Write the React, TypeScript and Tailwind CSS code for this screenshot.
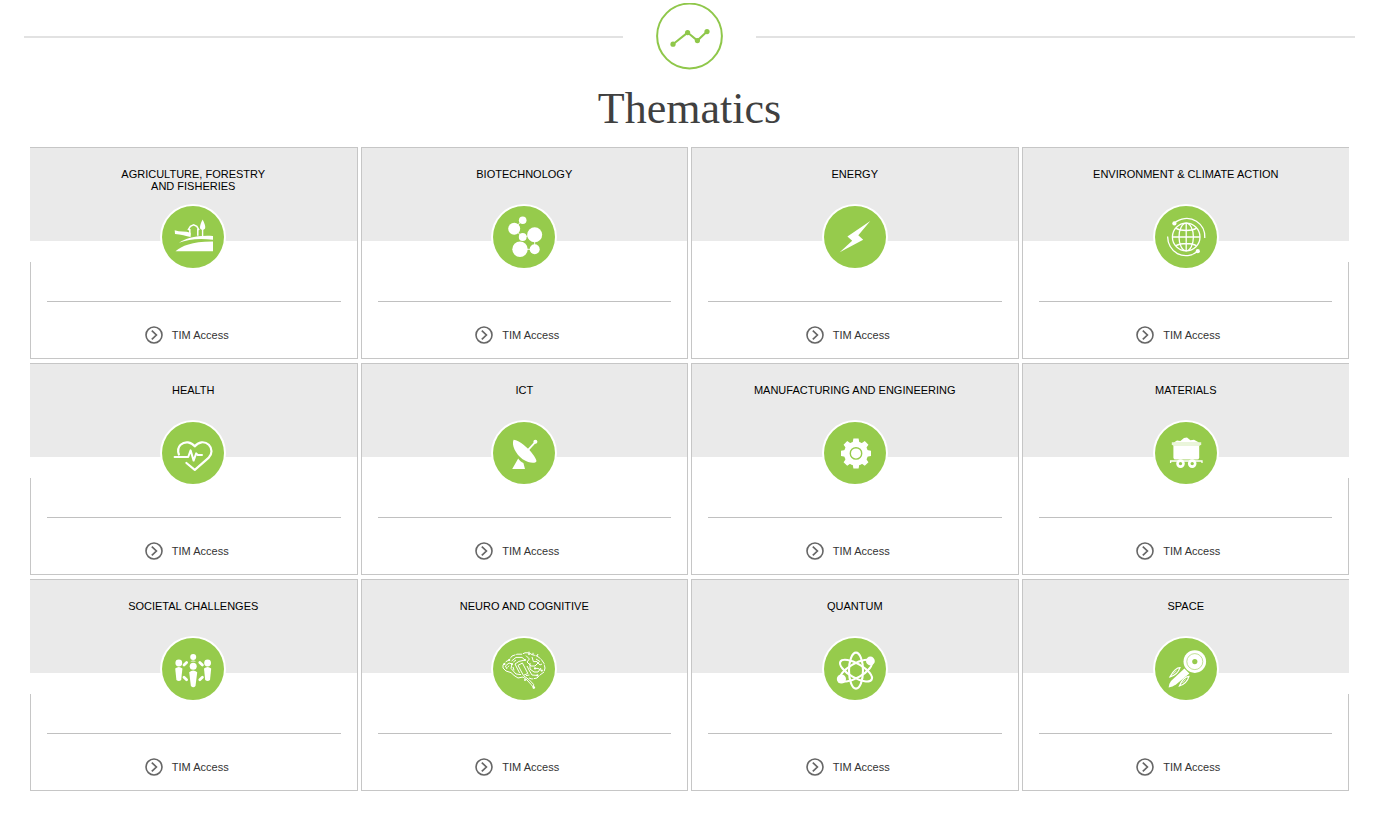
import type { ReactNode } from "react"
import { clsx } from "clsx"

interface Thematic {
  title: string
  icon: ReactNode
}

const AgricultureIcon = (
  <g>
    <path d="M15.5 47.2C22 42 32 37.4 53 37.6V47.2Z" />
    <path d="M19 38.8C26 34.4 36 31 53 32V35.8C38 34 28 35.6 19 38.8Z" />
    <path d="M14.7 26.2C20 28 25 26.8 30.6 28.8V33C26 32 21 30.4 15 30Z" />
    <path d="M28 26.2L30.4 22.4L33.6 20.8L36.8 22.4L39 26.2M29.8 25V31.5M37.8 25V31.8" fill="none" stroke="#fff" strokeWidth="1.5" />
    <path d="M42.6 15.6C44.4 19 45.5 21.8 45.2 24C44.8 26.4 40.4 26.4 40 24C39.8 21.8 40.8 19 42.6 15.6Z" />
    <path d="M41.9 25H43.3V32.4H41.9Z" />
  </g>
)

const BiotechnologyIcon = (
  <g>
    <path d="M22.7 24.7L31.7 16.3M22.7 24.7L31.7 33L43.7 30.7V45.3H29" fill="none" stroke="#fff" strokeWidth="0.9" />
    <circle cx="31.7" cy="16.3" r="3.8" />
    <circle cx="23.2" cy="24.7" r="6" />
    <circle cx="31.7" cy="33" r="3.9" />
    <circle cx="43.7" cy="30.7" r="7.5" />
    <circle cx="29" cy="45.3" r="7.7" />
    <circle cx="43.7" cy="45.3" r="5" />
  </g>
)

const EnergyIcon = <path d="M48.3 17L25.4 32.4L30.2 36.7L17.7 48.3L41.2 35.7L36.3 31.2Z" />

const EnvironmentIcon = (
  <g>
    <g fill="none" stroke="#fff" strokeWidth="1.3">
      <circle cx="33.2" cy="33" r="13.8" />
      <ellipse cx="33.2" cy="33" rx="7.2" ry="13.8" />
      <path d="M33.2 19.2V46.8M19.4 33H47M23 24.4C28 27.2 38.4 27.2 43.4 24.4M23 41.6C28 38.8 38.4 38.8 43.4 41.6" />
      <path d="M21.4 19C27 14.2 36 12.6 43.4 17.2C49 20.8 52.2 27 51.8 34" />
      <path d="M14.6 32.4C14.6 39.6 18.4 46.4 24.4 49.6C31 53 39 52.2 44.8 47.3" />
    </g>
    <circle cx="21.4" cy="19.4" r="2.1" />
    <circle cx="44.8" cy="47.2" r="2.1" />
  </g>
)

const HealthIcon = (
  <g fill="none" stroke="#fff" strokeWidth="2.2" strokeLinecap="round" strokeLinejoin="round">
    <path d="M18.9 34.5C17.6 31 18 27.4 20.6 24.8C25 20.8 31.2 21.8 34.8 26.4C38.2 21.6 44.6 20.8 48.8 24.8C52.6 28.6 52.2 34 48.8 37.6L34.8 49.8L26.4 43" />
    <path d="M14.6 37H28.2L30.6 30.4L33.6 40.6L36.2 33.4L37.8 35H42" strokeWidth="2" />
  </g>
)

const IctIcon = (
  <g>
    <path d="M22.6 19.8C26 19.8 31.6 23.4 36.8 28.6C41.8 33.4 45.8 39.4 45.4 41.4C44.4 43.4 38 43.4 31.6 39.2C24.6 34 20.2 24.8 22.6 19.8Z" />
    <path d="M35.6 31.6L44 22.4" stroke="#fff" strokeWidth="1.8" />
    <circle cx="44.4" cy="21.8" r="2" />
    <path d="M27.2 38.4C28.6 40.6 30.4 42 32.4 43L34 49H21.2Z" />
  </g>
)

const ManufacturingIcon = (
  <g>
    {[0, 45, 90, 135].map((angle) => (
      <path
        key={angle}
        transform={`rotate(${angle} 34 33.4)`}
        d="M31.4 18.4H36.6L37.6 24H30.4ZM31.4 48.4H36.6L37.6 42.8H30.4Z"
      />
    ))}
    <circle cx="34" cy="33.4" r="12" />
    <circle cx="34" cy="33.4" r="5.7" fill="none" stroke="#96cb4c" strokeWidth="1.4" />
  </g>
)

const MaterialsIcon = (
  <g>
    <path d="M20.8 22.6L24 20.4L27.4 21L31 18L34 17.6L37.4 20.2L41 19.8L46 22.6Z" />
    <path d="M18.8 22.3H48.2V24.2L46.8 25.8H20.2L18.8 24.2Z" fillOpacity="0.8" />
    <path d="M20.4 25.6H46.2V37.4Q46.2 39.6 44 39.6H22.6Q20.4 39.6 20.4 37.4Z" />
    <path d="M17.6 43V41H49V43" fill="none" stroke="#fff" strokeWidth="1.3" />
    <circle cx="27.5" cy="43.6" r="3" fill="#96cb4c" stroke="#fff" strokeWidth="2.6" />
    <circle cx="39.2" cy="43.6" r="3" fill="#96cb4c" stroke="#fff" strokeWidth="2.6" />
  </g>
)

const SocietalIcon = (
  <g>
    <circle cx="33.2" cy="21" r="3" />
    <path d="M30.4 25.6C32 24.2 34.4 24.2 36 25.6Z" />
    <circle cx="18.8" cy="27" r="3.4" />
    <path d="M15.2 32.6Q18.8 29.6 22.4 32.6L21.2 44Q18.8 46 16.4 44Z" />
    <circle cx="47.6" cy="27" r="3.4" />
    <path d="M44 32.6Q47.6 29.6 51.2 32.6L50 44Q47.6 46 45.2 44Z" />
    <circle cx="33.2" cy="30.2" r="3.5" />
    <path d="M29.2 36.2Q33.2 32.6 37.2 36.2L35.5 50Q33.2 52.4 30.9 50Z" />
    <path
      d="M24 29L26.6 26.4M42.4 29L39.8 26.4M24 41.2L26.6 43.8M42.4 41.2L39.8 43.8"
      stroke="#fff"
      strokeWidth="2.8"
      strokeLinecap="round"
    />
  </g>
)

const NeuroIcon = (
  <g fill="none" stroke="#fff" strokeWidth="1">
    <path d="M12 32V29L15 25.6L18 24L21 20L26 18.2H31L34 16.8H38L41 18.6L46 20L50 23L53 27.4L54 32L53 36L49 39L46 42L41 43L38 42" strokeDasharray="6 0.8" />
    <path d="M12 32L15 35L20 36.6L23 39.4L27 42L32 41L36 44L40 48.4L43 52" />
    <path d="M33 40L38 43.6L42.6 48.4V51" />
    <path d="M16 33L14.4 30L18 27L21 28L20 32.4L25 38L30 38.6" />
    <path d="M20.6 25L25 21.4H31L34 24L28 25.4L24 28L28.6 37" />
    <path d="M27 29.4L31.4 27L36.8 37.4L32.4 39.4L27 29.4" />
    <path d="M35 19.6L38.4 23L36 26L40 30H44L47 27M41 21L42.4 25.6H46L49 29L51 28" />
    <path d="M39 27V33L43 36H47L50 32M36 30L38 34L41 39L46 39.4M45 23L49 25.6M50.6 34.6L47 32.4H43" />
    <path d="M18 29.8L16.4 31.4M22 31L23 34.4M25 24L22.4 26M35 39.6L38.4 39M42 18.6V16.8M46 20L47 18M38 17V15.6" />
    <g fill="#fff" stroke="none">
      <circle cx="13.4" cy="28" r="1.1" />
      <circle cx="18.2" cy="24" r="1.1" />
      <circle cx="21" cy="28" r="1.1" />
      <circle cx="34" cy="24" r="1.1" />
      <circle cx="47" cy="27" r="1.1" />
      <circle cx="50.8" cy="34.6" r="1.1" />
      <circle cx="44" cy="32.4" r="1.1" />
      <circle cx="46.4" cy="39.4" r="1.1" />
      <circle cx="42.8" cy="51.6" r="1.3" />
      <circle cx="34" cy="44" r="1" />
      <circle cx="38" cy="18" r="1" />
    </g>
  </g>
)

const QuantumIcon = (
  <g>
    <g fill="none" stroke="#fff" strokeWidth="2.1">
      {[0, 60, 120].map((angle) => (
        <ellipse key={angle} cx="34" cy="34.6" rx="7" ry="18" transform={`rotate(${angle} 34 34.6)`} />
      ))}
    </g>
    <circle cx="48.4" cy="25" r="4.4" />
    <circle cx="19.4" cy="43" r="4.6" />
  </g>
)

const SpaceIcon = (
  <g>
    <path d="M31.4 32.4L36.4 37.4L23 48.6Q19.6 51 15.6 51.6Q15.4 48.6 18 45Z" />
    <circle cx="41.8" cy="25.6" r="11.3" />
    <circle cx="41.8" cy="25.6" r="8" fill="none" stroke="#96cb4c" strokeWidth="0.6" />
    <circle cx="41.8" cy="25.6" r="2.6" fill="#96cb4c" />
    <g fill="none" stroke="#fff" strokeWidth="1.2">
      <path d="M27 31.6Q22 31.6 17 40.8Q24.6 39 27 31.6Z" />
      <path d="M36 40.4Q30.2 41 26.4 50Q34 47.6 36 40.4Z" />
      <path d="M23.6 34.6L19.8 38.4M32.6 43.4L29.4 47" strokeWidth="0.8" />
    </g>
  </g>
)

const THEMATICS: Thematic[] = [
  { title: "AGRICULTURE, FORESTRY AND FISHERIES", icon: AgricultureIcon },
  { title: "BIOTECHNOLOGY", icon: BiotechnologyIcon },
  { title: "ENERGY", icon: EnergyIcon },
  { title: "ENVIRONMENT & CLIMATE ACTION", icon: EnvironmentIcon },
  { title: "HEALTH", icon: HealthIcon },
  { title: "ICT", icon: IctIcon },
  { title: "MANUFACTURING AND ENGINEERING", icon: ManufacturingIcon },
  { title: "MATERIALS", icon: MaterialsIcon },
  { title: "SOCIETAL CHALLENGES", icon: SocietalIcon },
  { title: "NEURO AND COGNITIVE", icon: NeuroIcon },
  { title: "QUANTUM", icon: QuantumIcon },
  { title: "SPACE", icon: SpaceIcon },
]

function ThematicCard({ thematic, first, last }: { thematic: Thematic; first: boolean; last: boolean }) {
  return (
    <article className="border border-[#c6c6c6] bg-white">
      {/* Outer cards let the header run over the side border */}
      <div className={clsx("bg-white pb-[21px]", first && "-ml-px", last && "-mr-px")}>
        <div className="flex h-[93px] flex-col items-center bg-[#eaeaea] pt-5">
          <h2 className="h-9 max-w-[220px] shrink-0 text-center text-[11px] leading-3 text-balance text-black">
            {thematic.title}
          </h2>
          <svg viewBox="0 0 66 66" className="size-[66px] shrink-0" fill="#fff" aria-hidden="true">
            <circle cx="33" cy="33" r="33" />
            <circle cx="33" cy="33" r="31" fill="#96cb4c" />
            {thematic.icon}
          </svg>
        </div>
      </div>
      <div className="mx-4 mt-[39px] border-t border-[#c0c0c0]" />
      <div className="flex justify-center pt-6 pr-3.5 pb-[14px]">
        <a href="#" className="flex items-center gap-[9px] text-[11px] leading-[18px] text-[#333]">
          <svg viewBox="0 0 18 18" className="size-[18px]" fill="none" stroke="#666" aria-hidden="true">
            <circle cx="9" cy="9" r="8" strokeWidth="1.6" />
            <path d="M6.8 4.6L11.4 9L6.8 13.4" strokeWidth="1.7" />
          </svg>
          TIM Access
        </a>
      </div>
    </article>
  )
}

export default function App() {
  return (
    <main className="min-h-screen bg-white pt-[3px] pr-8 pb-7 pl-6 font-['Liberation_Sans',Arial,sans-serif]">
      <div className="flex items-center gap-[33px]">
        <div className="h-0.5 flex-1 bg-[#e2e2e2]" />
        <svg viewBox="0 0 67 67" className="size-[67px]" fill="none" stroke="#8fc74a" aria-hidden="true">
          <circle cx="33.5" cy="33" r="32.4" strokeWidth="2" />
          <path d="M17 41.2L31.6 29.6L41.4 37.6L51 28.6" strokeWidth="2" />
          <g fill="#8fc74a" stroke="none">
            <circle cx="17" cy="41.2" r="2.6" />
            <circle cx="31.6" cy="29.6" r="2.6" />
            <circle cx="41.4" cy="37.6" r="2.6" />
            <circle cx="51" cy="28.6" r="2.6" />
          </g>
        </svg>
        <div className="h-0.5 flex-1 bg-[#e2e2e2]" />
      </div>

      <h1 className="mt-[15px] mb-[14px] text-center font-['Liberation_Serif',Georgia,serif] text-[44px] leading-[48px] text-[#404040]">
        Thematics
      </h1>

      <div className="grid grid-cols-4 gap-x-[3px] gap-y-1 px-1.5">
        {THEMATICS.map((thematic, index) => (
          <ThematicCard
            key={thematic.title}
            thematic={thematic}
            first={index % 4 === 0}
            last={index % 4 === 3}
          />
        ))}
      </div>
    </main>
  )
}
